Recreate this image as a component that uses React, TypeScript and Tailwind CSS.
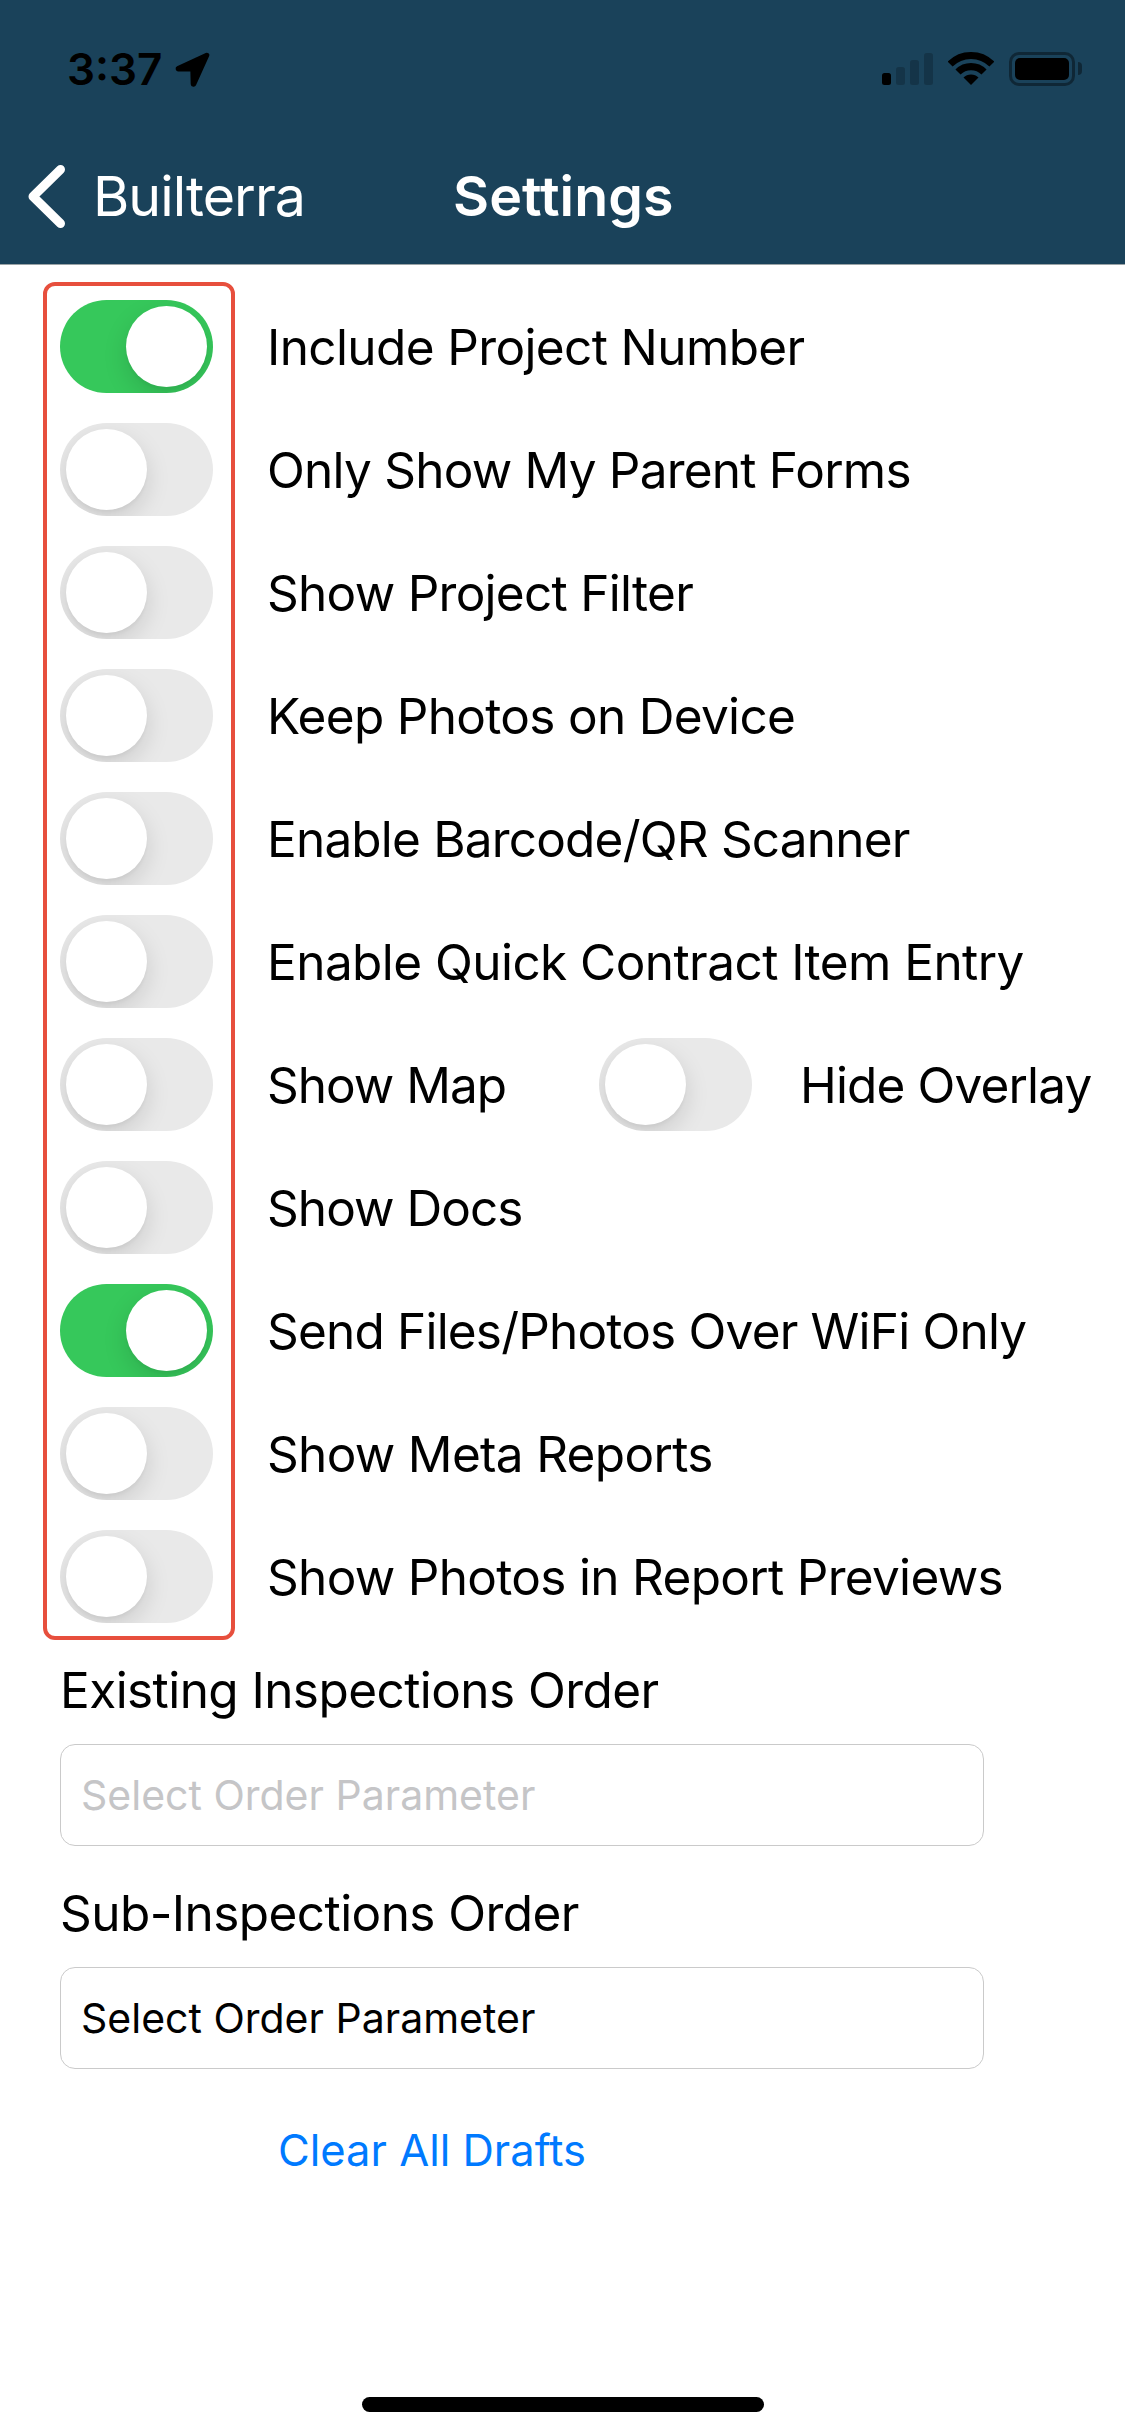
import clsx from "clsx";

type Setting = {
  label: string;
  tracking: string;
  enabled?: boolean;
};

const settings: Setting[] = [
  { label: "Include Project Number", tracking: "tracking-[-0.62px]", enabled: true },
  { label: "Only Show My Parent Forms", tracking: "tracking-[-0.78px]" },
  { label: "Show Project Filter", tracking: "tracking-[-0.72px]" },
  { label: "Keep Photos on Device", tracking: "tracking-[-0.69px]" },
  { label: "Enable Barcode/QR Scanner", tracking: "tracking-[-0.81px]" },
  { label: "Enable Quick Contract Item Entry", tracking: "tracking-[-0.56px]" },
  { label: "Show Map", tracking: "tracking-[-1.0px]" },
  { label: "Show Docs", tracking: "tracking-[-0.95px]" },
  { label: "Send Files/Photos Over WiFi Only", tracking: "tracking-[-0.81px]", enabled: true },
  { label: "Show Meta Reports", tracking: "tracking-[-0.68px]" },
  { label: "Show Photos in Report Previews", tracking: "tracking-[-0.69px]" },
];

const Toggle = ({ enabled }: { enabled?: boolean }) => (
  <button
    role="switch"
    aria-checked={!!enabled}
    className={clsx(
      "flex h-[93px] w-[153px] shrink-0 items-center overflow-hidden rounded-full p-1.5",
      enabled ? "justify-end bg-[#36c85b]" : "bg-[#e9e9e9]"
    )}
  >
    <span className="size-[81px] rounded-full bg-white shadow-[0_9px_24px_rgba(0,0,0,0.13),0_3px_3px_rgba(0,0,0,0.03)]" />
  </button>
);

const StatusBar = () => (
  <div className="flex h-[54px] items-start pl-[67px]">
    <span className="w-[107px] text-[44px] leading-[54px] font-semibold text-black">3:37</span>
    <svg className="mt-[9px] h-9 w-[37px]" viewBox="0 0 37 36">
      <path
        d="M32.8 4.2 L4.1 17.6 L4.2 18 H18.8 L19.2 33.3 L19.7 33.3 Z"
        fill="black"
        stroke="black"
        strokeWidth="5"
        strokeLinejoin="round"
      />
    </svg>
    <div className="mt-2.5 ml-auto flex h-[34px] items-start pr-[43px]">
      <div className="flex h-[34px] items-end gap-[5px] pb-px">
        <div className="h-3 w-[9px] rounded-[2.5px] bg-black" />
        <div className="h-[18px] w-[9px] rounded-[2.5px] bg-black/20" />
        <div className="h-[25px] w-[9px] rounded-[2.5px] bg-black/20" />
        <div className="h-8 w-[9px] rounded-[2.5px] bg-black/20" />
      </div>
      <svg className="ml-[15px] h-[33px] w-[46px]" viewBox="0 0 46 33">
        <path d="M2.14 12.14 A29.5 29.5 0 0 1 43.86 12.14" fill="none" stroke="black" strokeWidth="7" />
        <path d="M9.99 19.99 A18.4 18.4 0 0 1 36.01 19.99" fill="none" stroke="black" strokeWidth="7.2" />
        <path d="M23 33 L15.5 25.5 A10.6 10.6 0 0 1 30.5 25.5 Z" fill="black" />
      </svg>
      <div className="ml-[15px] flex h-[34px] w-[66px] rounded-[10px] border-3 border-black/40 p-[3px]">
        <div className="flex-1 rounded-[5px] bg-black" />
      </div>
      <div className="mt-2.5 ml-[3px] h-[13px] w-1 rounded-r-full bg-black/40" />
    </div>
  </div>
);

const OrderSelect = ({ value, muted }: { value: string; muted?: boolean }) => (
  <div
    className={clsx(
      "h-[102px] w-[924px] rounded-[15px] border border-[#cacaca] pl-5 text-[41px] leading-[100px]",
      muted && "text-[#c5c5c7]"
    )}
  >
    {value}
  </div>
);

const App = () => {
  return (
    <div className="h-[2436px] w-[1125px] overflow-hidden bg-white font-[Inter,sans-serif] text-black">
      <header className="h-[265px] border-b border-[#9aa3a6] bg-[#1a425a] pt-[42px] text-white">
        <StatusBar />
        <nav className="mt-[66px] grid h-[67px] grid-cols-[453px_222px_1fr] text-[55.5px] leading-[67px]">
          <div className="flex pl-7">
            <svg className="mt-[2px] mr-[27px] h-[65px] w-[38px]" viewBox="0 0 38 65">
              <path
                d="M32.5 5.5 L5 32.5 L32.5 59.5"
                fill="none"
                stroke="white"
                strokeWidth="9"
                strokeLinecap="round"
                strokeLinejoin="round"
              />
            </svg>
            <span className="tracking-[-0.95px]">Builterra</span>
          </div>
          <h1 className="font-semibold tracking-[0.05px] [font-variant-ligatures:no-common-ligatures]">Settings</h1>
        </nav>
      </header>

      <main className="relative pt-[35px] pl-[60px] text-[49.5px]">
        {/* Outline around the switch column */}
        <div className="pointer-events-none absolute top-[17px] left-[43px] h-[1358px] w-48 rounded-xl border-4 border-[#e74f3d]" />

        <div className="flex flex-col gap-[30px]">
          {settings.map(({ label, tracking, enabled }) => (
            <div key={label} className="flex h-[93px] items-start leading-[94px] whitespace-nowrap">
              <Toggle enabled={enabled} />
              <span className={clsx("ml-[54px]", tracking, label === "Show Map" && "w-[332px]")}>{label}</span>
              {label === "Show Map" && (
                <>
                  <Toggle />
                  <span className="ml-12 tracking-[-0.86px]">Hide Overlay</span>
                </>
              )}
            </div>
          ))}
        </div>

        <h2 className="mt-[37px] mb-6 leading-[60px] tracking-[-0.57px]">Existing Inspections Order</h2>
        <OrderSelect value="Select Order Parameter" muted />
        <h2 className="mt-[37px] mb-6 leading-[60px] tracking-[-0.57px]">Sub-Inspections Order</h2>
        <OrderSelect value="Select Order Parameter" />

        <button className="mt-[55px] ml-[218px] block text-[43.5px] leading-[53px] text-[#007aff] [font-variant-ligatures:no-common-ligatures]">
          Clear All Drafts
        </button>
      </main>

      <div className="mt-[220px] ml-[362px] h-[15px] w-[402px] rounded-full bg-black" />
    </div>
  );
};

export default App;
